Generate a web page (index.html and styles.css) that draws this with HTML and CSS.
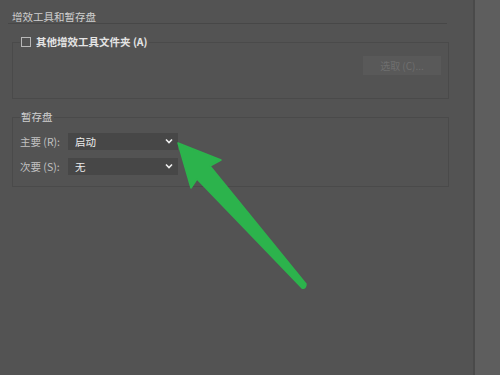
FILE: index.html
```html
<!DOCTYPE html>
<html lang="zh">
<head>
<meta charset="utf-8">
<link rel="stylesheet" href="styles.css">
</head>
<body>
<div class="window">
  <div class="panel">
    <div class="section-title">增效工具和暂存盘</div>
    <fieldset class="group plugins">
      <legend class="check-legend"><span class="checkbox"></span><span class="check-label">其他增效工具文件夹 (A)</span></legend>
      <div class="btn-row"><div class="btn-disabled">选取 (C)...</div></div>
    </fieldset>
    <fieldset class="group scratch">
      <legend class="plain-legend">暂存盘</legend>
      <div class="row">
        <span class="label">主要 (R):</span>
        <div class="select"><span>启动</span><svg class="chev" width="8" height="6" viewBox="0 0 8 6"><path d="M1 1.5 L4 4.5 L7 1.5" fill="none" stroke="#f0f0f0" stroke-width="1.6"/></svg></div>
      </div>
      <div class="row">
        <span class="label">次要 (S):</span>
        <div class="select"><span>无</span><svg class="chev" width="8" height="6" viewBox="0 0 8 6"><path d="M1 1.5 L4 4.5 L7 1.5" fill="none" stroke="#f0f0f0" stroke-width="1.6"/></svg></div>
      </div>
    </fieldset>
  </div>
  <div class="strip"></div>
</div>
<svg class="arrow" width="500" height="375" viewBox="0 0 500 375">
  <path d="M178 143 L221 160 L210 166 L306 284 Q306 289 302 288 L197 179 L191 188 Z" fill="#2cb34c" stroke="#2cb34c" stroke-width="1.5" stroke-linejoin="round"/>
</svg>
</body>
</html>
```

FILE: styles.css
```css
html, body {
  margin: 0;
  padding: 0;
}
body {
  width: 500px;
  height: 375px;
  overflow: hidden;
  background: #535353;
  font-family: "Noto Sans CJK SC", "Noto Sans", sans-serif;
  font-size: 10.5px;
  color: #cfcfcf;
  position: relative;
}
.window {
  display: flex;
  height: 375px;
}
.panel {
  width: 475px;
  box-sizing: border-box;
  border-right: 2px solid #4a4a4a;
  padding-top: 10px;
}
.strip {
  flex: 1;
  background: #5e5e5e;
}
.section-title {
  margin: 0 26px 0 8px;
  padding-left: 4px;
  height: 13px;
  line-height: 13px;
  border-bottom: 1px solid #474747;
  color: #cfcfcf;
}
.group {
  margin: 12px 0 0 12px;
  width: 437px;
  box-sizing: border-box;
  border: 1px solid #4a4a4a;
  padding: 0 7px;
  min-width: 0;
}
.check-legend, .plain-legend {
  padding: 0 1px;
  height: 12px;
  line-height: 12px;
  display: flex;
  align-items: center;
}
.plain-legend {
  display: block;
}
.checkbox {
  width: 8px;
  height: 8px;
  border: 1px solid #b8b8b8;
  margin-right: 5px;
}
.check-label {
  font-weight: bold;
  color: #e4e4e4;
}
.plugins {
  padding-top: 8px;
  padding-bottom: 23px;
}
.btn-row {
  display: flex;
  justify-content: flex-end;
}
.btn-disabled {
  width: 78px;
  height: 19px;
  line-height: 19px;
  background: #595959;
  color: #6f6f6f;
  font-size: 10px;
  text-align: center;
}
.scratch {
  padding-top: 9px;
  padding-bottom: 11px;
  display: flex;
  flex-direction: column;
  gap: 7px;
}
.row {
  display: flex;
  align-items: center;
  height: 18px;
  gap: 7px;
}
.label {
  width: 41px;
  color: #c2c2c2;
  white-space: nowrap;
}
.select {
  width: 110px;
  height: 17px;
  box-sizing: border-box;
  background: #474747;
  display: flex;
  align-items: center;
  justify-content: space-between;
  padding: 0 5px 0 7px;
  color: #ececec;
}
.chev {
  display: block;
}
.arrow {
  position: absolute;
  left: 0;
  top: 0;
  pointer-events: none;
}
```
